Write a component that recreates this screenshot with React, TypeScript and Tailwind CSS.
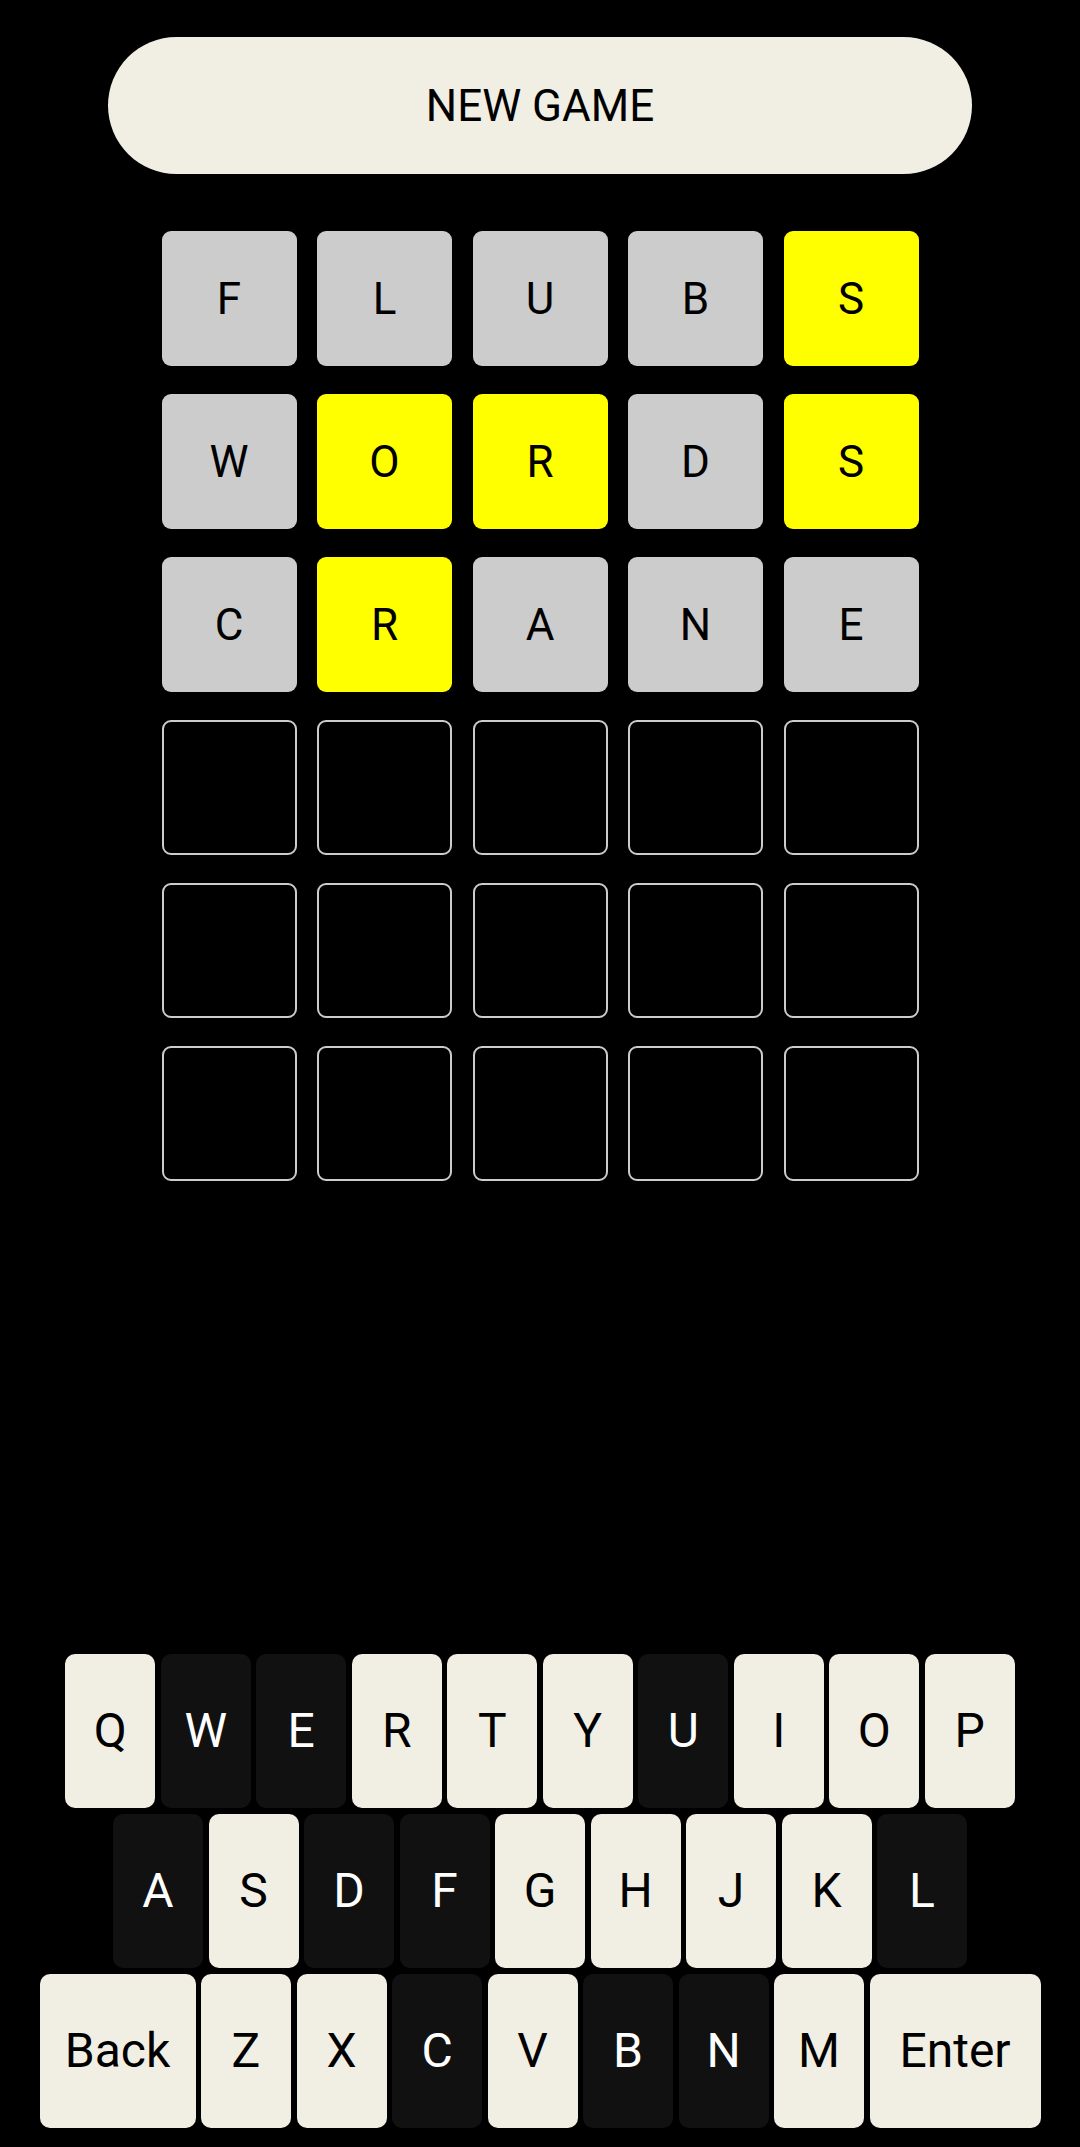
import React from 'react';

type TileState = 'absent' | 'present' | 'empty';

const guesses: { letter: string; state: TileState }[][] = [
  [
    { letter: 'F', state: 'absent' },
    { letter: 'L', state: 'absent' },
    { letter: 'U', state: 'absent' },
    { letter: 'B', state: 'absent' },
    { letter: 'S', state: 'present' },
  ],
  [
    { letter: 'W', state: 'absent' },
    { letter: 'O', state: 'present' },
    { letter: 'R', state: 'present' },
    { letter: 'D', state: 'absent' },
    { letter: 'S', state: 'present' },
  ],
  [
    { letter: 'C', state: 'absent' },
    { letter: 'R', state: 'present' },
    { letter: 'A', state: 'absent' },
    { letter: 'N', state: 'absent' },
    { letter: 'E', state: 'absent' },
  ],
];

const emptyRow = Array.from({ length: 5 }, () => ({ letter: '', state: 'empty' as TileState }));
const board = [...guesses, emptyRow, emptyRow, emptyRow];

// letters that were used and not in the word are darkened
const usedUp = new Set(['W', 'E', 'U', 'A', 'D', 'F', 'L', 'C', 'B', 'N']);

const rows = [
  ['Q', 'W', 'E', 'R', 'T', 'Y', 'U', 'I', 'O', 'P'],
  ['A', 'S', 'D', 'F', 'G', 'H', 'J', 'K', 'L'],
  ['Back', 'Z', 'X', 'C', 'V', 'B', 'N', 'M', 'Enter'],
];

function Tile({ letter, state }: { letter: string; state: TileState }) {
  const look =
    state === 'present'
      ? 'bg-[#ffff00]'
      : state === 'absent'
        ? 'bg-[#cccccc]'
        : 'border-2 border-[#cccccc] bg-black';
  return (
    <div
      className={`flex h-[135px] w-[135px] items-center justify-center rounded-[9px] text-[44px] text-black ${look}`}
    >
      {letter}
    </div>
  );
}

function Key({ label }: { label: string }) {
  const width = label === 'Back' ? 'w-[156px]' : label === 'Enter' ? 'w-[171px]' : 'w-[90px]';
  const dark = usedUp.has(label);
  return (
    <button
      className={`flex h-[154px] items-center justify-center rounded-[10px] text-[48px] ${width} ${
        dark ? 'bg-[#111111] text-white' : 'bg-[#f1eee3] text-black'
      }`}
    >
      {label}
    </button>
  );
}

export default function App() {
  return (
    <div
      className="flex min-h-screen flex-col items-center bg-black"
      style={{ fontFamily: 'Roboto, "Noto Sans", sans-serif' }}
    >
      <button className="mt-[37px] flex h-[137px] w-[864px] items-center justify-center rounded-full bg-[#f1eee3] text-[44px] text-black">
        NEW GAME
      </button>

      {/* Board */}
      <div className="mt-[57px] flex flex-col gap-[28px]">
        {board.map((row, r) => (
          <div key={r} className="flex gap-[20.5px]">
            {row.map((tile, c) => (
              <Tile key={c} letter={tile.letter} state={tile.state} />
            ))}
          </div>
        ))}
      </div>

      {/* Keyboard */}
      <div className="mt-auto mb-[19px] flex flex-col items-center gap-[6px]">
        {rows.map((row, i) => (
          <div key={i} className="flex gap-[5.5px]">
            {row.map((k) => (
              <Key key={k} label={k} />
            ))}
          </div>
        ))}
      </div>
    </div>
  );
}
